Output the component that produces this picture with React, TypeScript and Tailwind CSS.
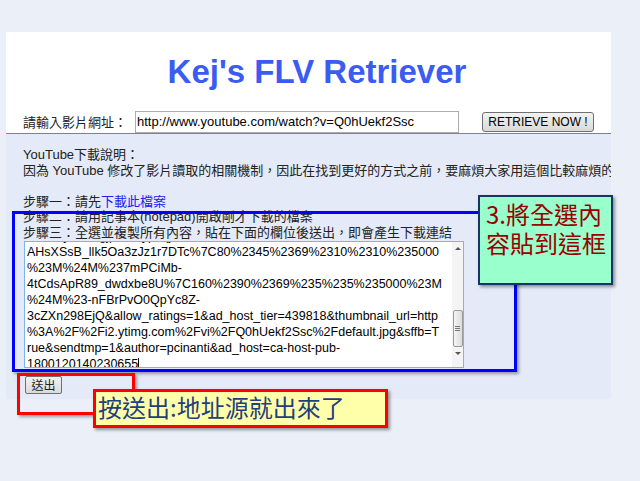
const latin = "font-['Liberation_Sans','Noto_Sans_CJK_TC',sans-serif]";
const cjk = "font-['Noto_Sans_CJK_TC','Liberation_Sans',sans-serif]";

const pasted = [
  "m2Ktoy3Rd9gjp%2Fyp7qj%7C34%2369%23",
  "AHsXSsB_llk5Oa3zJz1r7DTc%7C80%2345%2369%2310%2310%235000",
  "%23M%24M%237mPCiMb-",
  "4tCdsApR89_dwdxbe8U%7C160%2390%2369%235%235%235000%23M",
  "%24M%23-nFBrPvO0QpYc8Z-",
  "3cZXn298EjQ&allow_ratings=1&ad_host_tier=439818&thumbnail_url=http",
  "%3A%2F%2Fi2.ytimg.com%2Fvi%2FQ0hUekf2Ssc%2Fdefault.jpg&sffb=T",
  "rue&sendtmp=1&author=pcinanti&ad_host=ca-host-pub-",
  "1800120140230655",
];

function FakeScrollbar() {
  return (
    <div className="absolute right-0 top-0 bottom-[8px] w-[11px] bg-[#f4f4f4] flex flex-col items-center">
      <div className="h-[13px] flex items-center justify-center">
        <div className="w-0 h-0 border-l-[3px] border-r-[3px] border-b-[3px] border-l-transparent border-r-transparent border-b-[#555]" />
      </div>
      <div className="flex-1" />
      <div className="w-[10px] h-[37px] rounded-[2px] border border-[#9a9a9a] bg-gradient-to-r from-[#f4f4f4] to-[#dcdcdc] flex flex-col items-center justify-center gap-[1px]">
        <div className="w-[5px] h-px bg-[#777]" />
        <div className="w-[5px] h-px bg-[#777]" />
        <div className="w-[5px] h-px bg-[#777]" />
      </div>
      <div className="h-[12px] flex items-center justify-center">
        <div className="w-0 h-0 border-l-[3px] border-r-[3px] border-t-[3px] border-l-transparent border-r-transparent border-t-[#555]" />
      </div>
    </div>
  );
}

export default function App() {
  return (
    <div className="relative w-[640px] h-[481px] overflow-hidden bg-[#ebeff8]">
      <div className="ml-[6px] mt-[32px] w-[605px]">
        {/* header */}
        <div className="bg-white h-[102px] border-b border-[#5b7ef0] flex flex-col">
          <h1 className="mt-[21px] pl-[17px] text-center text-[33px] leading-[38px] font-bold text-[#3b5cf2] font-['Liberation_Sans',sans-serif]">
            Kej's FLV Retriever
          </h1>
          <div className="mt-[20px] flex items-center pl-[17px]">
            <span className={`${cjk} text-[13px] text-[#222] w-[112px]`}>請輸入影片網址：</span>
            <div className={`${latin} w-[324px] h-[22px] border border-[#abadb3] px-[1px] text-[13px] leading-[20px] text-black`}>
              http://www.youtube.com/watch?v=Q0hUekf2Ssc
            </div>
            <button className={`${latin} ml-[23px] w-[112px] h-[20px] rounded-[3px] border border-[#707070] bg-gradient-to-b from-[#f2f2f2] to-[#d9d9d9] text-[12px] leading-[18px] text-black`}>
              RETRIEVE NOW !
            </button>
          </div>
        </div>

        {/* instructions */}
        <div className={`${latin} bg-[#e4eaf7] h-[265px] pt-[13px] pl-[17px] overflow-hidden text-[13px] leading-[15.5px] text-[#222] whitespace-nowrap`}>
          <p>YouTube下載說明：</p>
          <p>因為 YouTube 修改了影片讀取的相關機制，因此在找到更好的方式之前，要麻煩大家用這個比較麻煩的方法來下載影片</p>
          <p>&nbsp;</p>
          <p>
            步驟一：請先<a className="text-[#2020f0]">下載此檔案</a>
          </p>
          <p>步驟二：請用記事本(notepad)開啟剛才下載的檔案</p>
          <p>步驟三：全選並複製所有內容，貼在下面的欄位後送出，即會產生下載連結</p>

          <div className="relative ml-[1px] mt-[1px] w-[440px] h-[127px] border border-[#7eb4ea] bg-white overflow-hidden">
            <div className="-mt-[14px] pl-[2px] text-[12.5px] leading-[16px] text-black">
              {pasted.map((line, i) => (
                <div key={i} className="whitespace-pre">
                  {line}
                  {i === pasted.length - 1 && <span className="inline-block w-px h-[13px] bg-black align-middle" />}
                </div>
              ))}
            </div>
            <FakeScrollbar />
            <div className="absolute right-0 bottom-0 w-[11px] h-[8px] bg-[#f4f4f4]" />
          </div>

          <button className={`${cjk} ml-[2px] mt-[8px] w-[37px] h-[18px] rounded-[2px] border border-[#707070] bg-gradient-to-b from-[#f2f2f2] to-[#dadada] text-[12px] leading-[16px] text-[#222]`}>
            送出
          </button>
        </div>
      </div>

      {/* annotations */}
      <div className="absolute left-[12px] top-[211px] w-[505px] h-[161px] border-[3px] border-[#0000ff] shadow-[2px_2px_3px_rgba(0,0,0,0.35)]" />
      <div className="absolute left-[478px] top-[195px] w-[135px] h-[90px] border-2 border-[#1a3366] bg-[#99ffcc] shadow-[2px_2px_3px_rgba(0,0,0,0.4)] pl-[6px] pt-[2px]">
        <p className={`${cjk} text-[24px] leading-[29px] text-[#990000]`}>
          3.將全選內
          <br />
          容貼到這框
        </p>
      </div>
      <div className="absolute left-[17px] top-[373px] w-[118px] h-[42px] border-[3px] border-[#ff0000] shadow-[2px_2px_3px_rgba(0,0,0,0.35)]" />
      <div className="absolute left-[93px] top-[389px] w-[295px] h-[39px] border-[3px] border-[#ff0000] bg-[#ffffaa] shadow-[2px_2px_3px_rgba(0,0,0,0.4)] pl-[2px]">
        <p className={`${cjk} text-[24px] leading-[29px] text-[#1f3f7f]`}>按送出:地址源就出來了</p>
      </div>
    </div>
  );
}
